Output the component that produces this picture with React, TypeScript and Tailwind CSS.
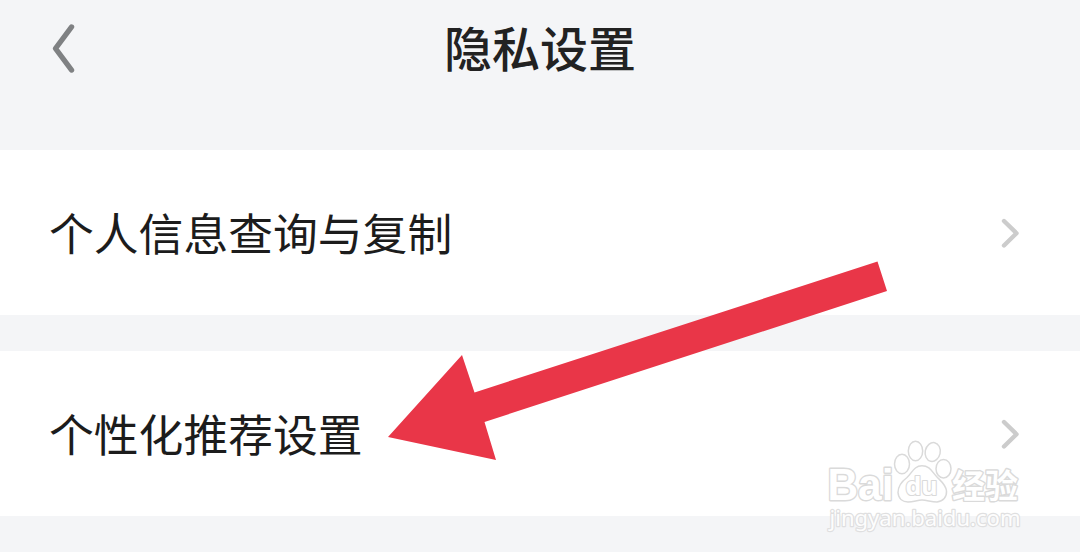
const ROWS = ["个人信息查询与复制", "个性化推荐设置"];

function BackIcon() {
  return (
    <svg width="80" height="100" viewBox="0 0 80 100" fill="none">
      <path d="M71.5 27 L55.5 48.5 L71.5 70" stroke="#7f8183" strokeWidth="5.4" strokeLinecap="round" strokeLinejoin="round" />
    </svg>
  );
}

function ChevronIcon() {
  return (
    <svg width="20" height="32" viewBox="0 0 20 32" fill="none">
      <path d="M4 4 L16.5 16.2 L4 28.5" stroke="#cccccc" strokeWidth="4.4" strokeLinecap="round" strokeLinejoin="round" />
    </svg>
  );
}

function SettingRow({ label }: { label: string }) {
  return (
    <button type="button" className="flex h-[165px] w-full items-center justify-between bg-white pl-[49px] pr-[60px] text-left">
      <span className="text-[44.8px] leading-none whitespace-nowrap text-[#1c1c1c]">{label}</span>
      <ChevronIcon />
    </button>
  );
}

function Arrow() {
  return (
    <svg className="pointer-events-none absolute left-0 top-0" width="1080" height="556" viewBox="0 0 1080 556">
      <polygon points="388,437 462,355 474.5,392.5 877.5,261.5 887,291 484.5,422 496,460" fill="#e93648" />
    </svg>
  );
}

function Watermark() {
  return (
    <svg
      className="pointer-events-none absolute left-[820px] top-[434px]"
      width="220"
      height="104"
      viewBox="0 0 220 104"
      fill="#ffffff"
      stroke="#dadada"
      strokeWidth="1.5"
      strokeLinejoin="round"
    >
      <g fontFamily="'Liberation Sans', sans-serif" fontWeight="700" paintOrder="stroke" strokeWidth="2.8">
        <text x="7.5" y="66" fontSize="44" textLength="66" lengthAdjust="spacingAndGlyphs">Bai</text>
        <text x="132" y="64" fontSize="33" fontFamily="'Noto Sans CJK SC', sans-serif" textLength="66" lengthAdjust="spacingAndGlyphs">经验</text>
      </g>
      <ellipse cx="82" cy="30" rx="7.5" ry="9.7" />
      <ellipse cx="95.5" cy="17" rx="7.2" ry="9.8" />
      <ellipse cx="112.7" cy="18" rx="7.5" ry="9.5" transform="rotate(12 112.7 18)" />
      <ellipse cx="123.5" cy="34.7" rx="7.5" ry="9.3" />
      <path d="M102 31.8 C94 31.8 92 39 87 43.5 C81 48 78 53 78 58.5 C78.5 65 83 68 88 68 C94 68 97 66 102 66 C107 66 111 68 117 68 C123 67.5 127 63 126.5 57 C126 51 121 47 117 43 C112 38 110 31.8 102 31.8Z" />
      <text x="85.5" y="61" fontSize="25" fontFamily="'Noto Sans', sans-serif" fontWeight="700" paintOrder="stroke" strokeWidth="2.2" textLength="32" lengthAdjust="spacingAndGlyphs">du</text>
      <text x="9.5" y="92" fontSize="22" fontFamily="'Noto Sans', sans-serif" fill="#fdfdfd" paintOrder="stroke" strokeWidth="2.4" stroke="#dfdfe0" textLength="191" lengthAdjust="spacingAndGlyphs">jingyan.baidu.com</text>
    </svg>
  );
}

export default function App() {
  return (
    <div className="h-[556px] w-[1080px] overflow-hidden bg-white font-['Noto_Sans_CJK_SC',sans-serif]">
      <div className="relative h-[552px] bg-[#f4f5f7]">
        <header className="grid h-[150px] grid-cols-[80px_1fr_80px] items-start">
          <button type="button" aria-label="返回">
            <BackIcon />
          </button>
          <h1 className="pt-[22px] text-center text-[48px] leading-none font-medium text-[#222222]">隐私设置</h1>
        </header>
        <main className="flex flex-col gap-[36px]">
          {ROWS.map((label) => (
            <SettingRow key={label} label={label} />
          ))}
        </main>
        <Watermark />
        <Arrow />
      </div>
    </div>
  );
}
